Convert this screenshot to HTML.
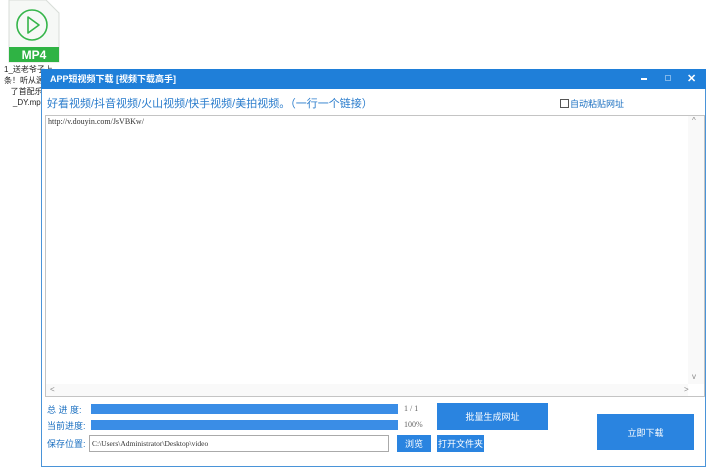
<!DOCTYPE html>
<html><head><meta charset="utf-8"><style>
*{margin:0;padding:0;box-sizing:border-box}
body{width:709px;height:468px;background:#fff;position:relative;overflow:hidden;font-family:"Liberation Sans","Noto Sans CJK SC",sans-serif}
.a{position:absolute}
.lbl{font-size:9px;color:#1a6fc0}
.btn{background:#2a84e0;color:#fff;font-size:9px;display:flex;align-items:center;justify-content:center}
.mono{font-family:"Liberation Serif","Noto Sans CJK SC",serif;font-size:8px;color:#333}
</style></head><body>
<svg class="a" style="left:8px;top:0" width="52" height="63" viewBox="0 0 52 63">
<path d="M1 0H38L51 13V62H1Z" fill="#f6f8f6" stroke="#d8ddd8"/>
<circle cx="24" cy="25" r="15" fill="none" stroke="#35b54a" stroke-width="1.6"/>
<path d="M20 17L31 25L20 33Z" fill="none" stroke="#35b54a" stroke-width="1.6" stroke-linejoin="round"/>
<rect x="1" y="47" width="50" height="15" fill="#2fb344"/>
<text x="26" y="59" fill="#fff" font-size="12" font-weight="bold" text-anchor="middle" font-family="Liberation Sans">MP4</text>
</svg>
<div class="a" style="left:4px;top:64px;font-size:8px;line-height:11px;color:#222">1_送老爷子上<br>条！听从源<br>&nbsp;&nbsp;&nbsp;了首配乐<br>&nbsp;&nbsp;&nbsp;&nbsp;_DY.mp</div>
<div class="a" style="left:41px;top:69px;width:665px;height:398px;background:#fff;border:1px solid #4a94d8"></div>
<div class="a" style="left:41px;top:69px;width:665px;height:20px;background:#1f7fd9;color:#fff;font-size:9px;font-weight:bold;line-height:20px;padding-left:9px">APP短视频下载 [视频下载高手]</div>
<div class="a" style="left:641px;top:78px;width:6px;height:2px;background:#fff"></div>
<div class="a" style="left:665px;top:75px;width:6px;height:6px;border:1px solid #7fb6ea"></div>
<div class="a" style="left:687px;top:72px;color:#fff;font-size:11px;font-weight:bold">✕</div>
<div class="a" style="left:47px;top:95px;font-size:11px;color:#2a7ccc">好看视频/抖音视频/火山视频/快手视频/美拍视频。（一行一个链接）</div>
<div class="a" style="left:560px;top:97px;font-size:9px;color:#1a6fc0;display:flex;align-items:center"><span style="display:inline-block;width:9px;height:9px;border:1px solid #555;margin-right:1px"></span>自动粘贴网址</div>
<div class="a" style="left:45px;top:115px;width:660px;height:282px;border:1px solid #c4c4c4"></div>
<div class="a mono" style="left:48px;top:117px">http://v.douyin.com/JsVBKw/</div>
<div class="a" style="left:688px;top:116px;width:16px;height:268px;background:#f9f9f9"></div>
<div class="a" style="left:46px;top:384px;width:642px;height:12px;background:#f9f9f9"></div>
<div class="a" style="left:692px;top:116px;font-size:8px;color:#888">^</div>
<div class="a" style="left:692px;top:372px;font-size:8px;color:#888">v</div>
<div class="a" style="left:50px;top:385px;font-size:8px;color:#888">&lt;</div>
<div class="a" style="left:684px;top:385px;font-size:8px;color:#888">&gt;</div>
<div class="a lbl" style="left:47px;top:403px">总 进 度:</div>
<div class="a lbl" style="left:47px;top:419px">当前进度:</div>
<div class="a lbl" style="left:47px;top:437px">保存位置:</div>
<div class="a" style="left:91px;top:404px;width:307px;height:10px;background:#3a8de6"></div>
<div class="a" style="left:91px;top:420px;width:307px;height:10px;background:#3a8de6"></div>
<div class="a mono" style="left:404px;top:404px;color:#666">1 / 1</div>
<div class="a mono" style="left:404px;top:420px;color:#666">100%</div>
<div class="a" style="left:89px;top:435px;width:300px;height:17px;border:1px solid #aaa"></div>
<div class="a mono" style="left:92px;top:439px;font-size:7.5px">C:\Users\Administrator\Desktop\video</div>
<div class="a btn" style="left:397px;top:435px;width:34px;height:17px">浏览</div>
<div class="a btn" style="left:437px;top:435px;width:47px;height:17px">打开文件夹</div>
<div class="a btn" style="left:437px;top:403px;width:111px;height:27px">批量生成网址</div>
<div class="a btn" style="left:597px;top:414px;width:97px;height:36px">立即下载</div>
</body></html>
